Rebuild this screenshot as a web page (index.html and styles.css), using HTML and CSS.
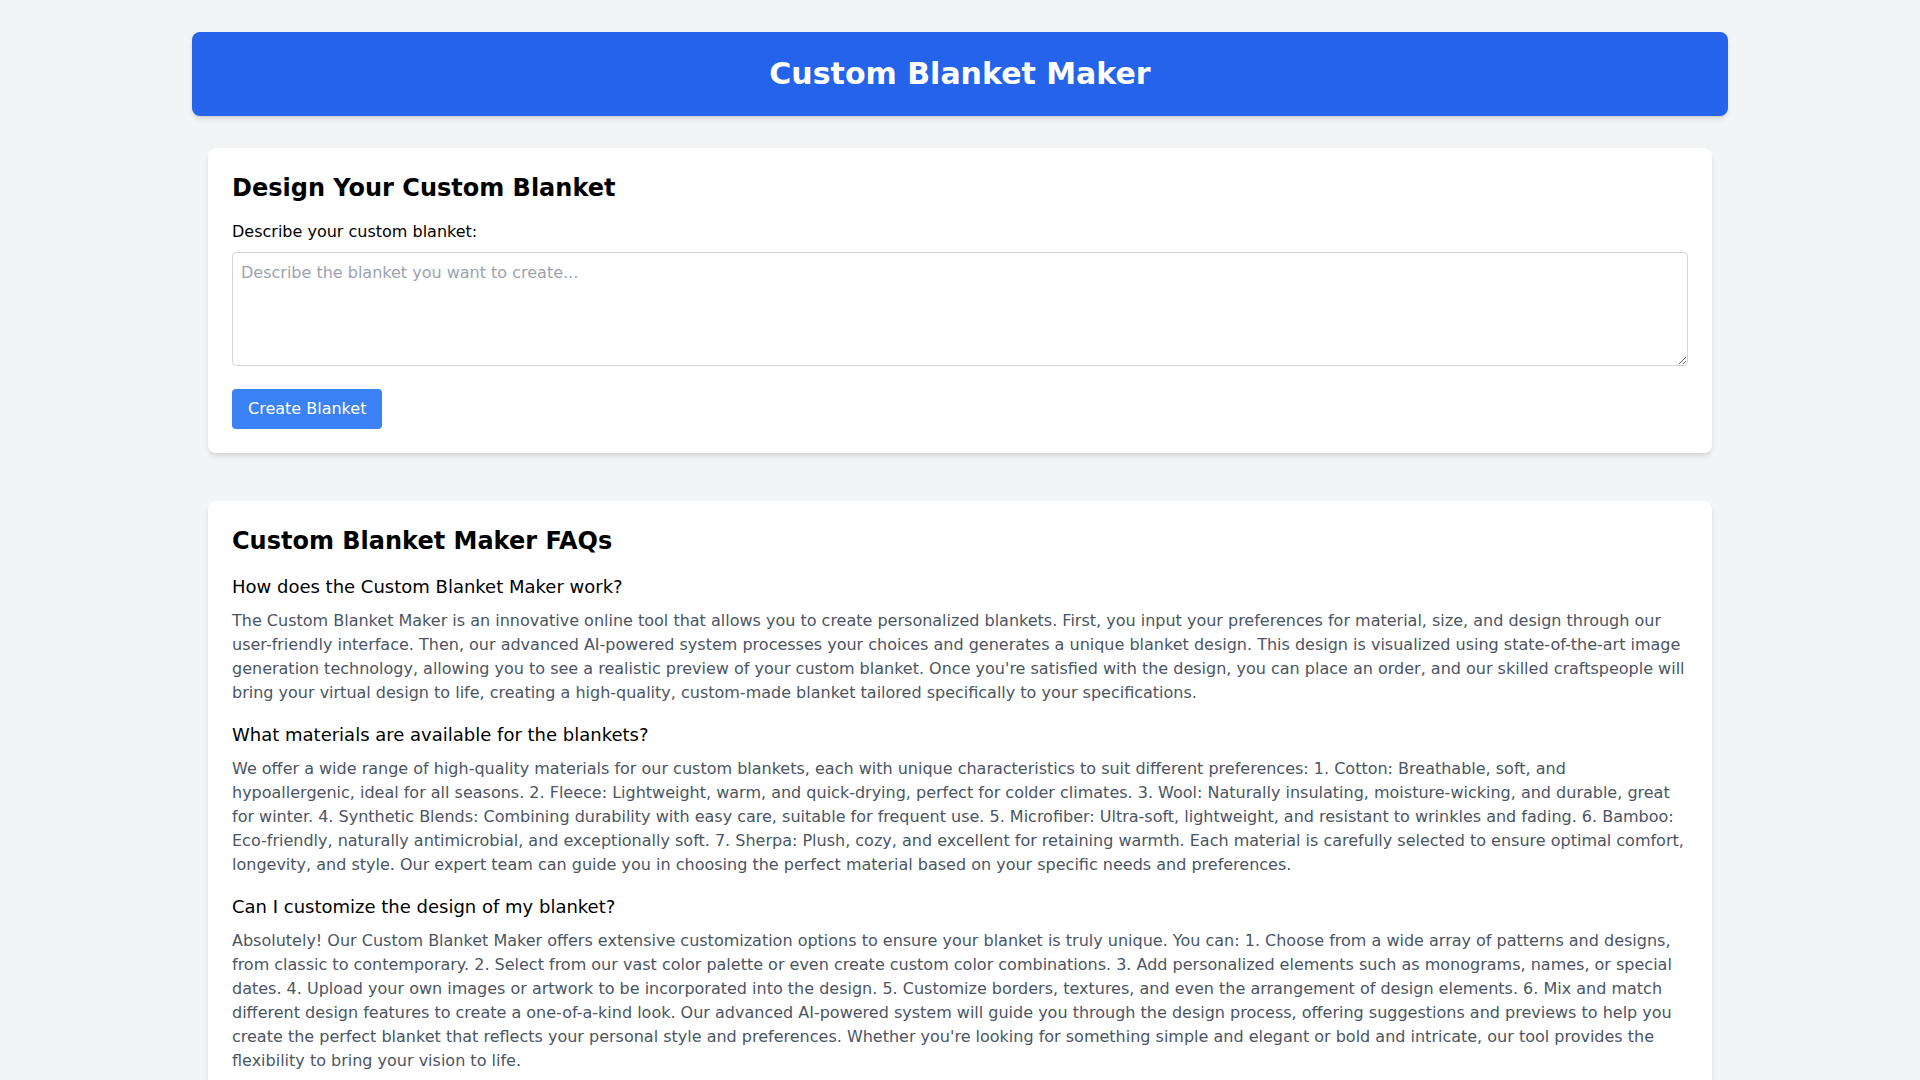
FILE: index.html
```html
<!DOCTYPE html>
<html lang="en">
<head>
<meta charset="utf-8">
<title>Custom Blanket Maker</title>
<link rel="stylesheet" href="styles.css">
</head>
<body>
<div class="container">
  <header class="site-header">
    <h1 class="site-title">Custom Blanket Maker</h1>
  </header>
  <main class="main">
    <section class="card design-card">
      <h2 class="card-title">Design Your Custom Blanket</h2>
      <label class="field-label" for="desc">Describe your custom blanket:</label>
      <textarea id="desc" class="field-textarea" rows="4" placeholder="Describe the blanket you want to create..."></textarea>
      <button class="btn-primary" type="button">Create Blanket</button>
    </section>
    <section class="card faq-card">
      <h2 class="card-title">Custom Blanket Maker FAQs</h2>
      <div class="faq-item">
        <h3 class="faq-question">How does the Custom Blanket Maker work?</h3>
        <p class="faq-answer">The Custom Blanket Maker is an innovative online tool that allows you to create personalized blankets. First, you input your preferences for material, size, and design through our user-friendly interface. Then, our advanced AI-powered system processes your choices and generates a unique blanket design. This design is visualized using state-of-the-art image generation technology, allowing you to see a realistic preview of your custom blanket. Once you're satisfied with the design, you can place an order, and our skilled craftspeople will bring your virtual design to life, creating a high-quality, custom-made blanket tailored specifically to your specifications.</p>
      </div>
      <div class="faq-item">
        <h3 class="faq-question">What materials are available for the blankets?</h3>
        <p class="faq-answer">We offer a wide range of high-quality materials for our custom blankets, each with unique characteristics to suit different preferences: 1. Cotton: Breathable, soft, and hypoallergenic, ideal for all seasons. 2. Fleece: Lightweight, warm, and quick-drying, perfect for colder climates. 3. Wool: Naturally insulating, moisture-wicking, and durable, great for winter. 4. Synthetic Blends: Combining durability with easy care, suitable for frequent use. 5. Microfiber: Ultra-soft, lightweight, and resistant to wrinkles and fading. 6. Bamboo: Eco-friendly, naturally antimicrobial, and exceptionally soft. 7. Sherpa: Plush, cozy, and excellent for retaining warmth. Each material is carefully selected to ensure optimal comfort, longevity, and style. Our expert team can guide you in choosing the perfect material based on your specific needs and preferences.</p>
      </div>
      <div class="faq-item">
        <h3 class="faq-question">Can I customize the design of my blanket?</h3>
        <p class="faq-answer">Absolutely! Our Custom Blanket Maker offers extensive customization options to ensure your blanket is truly unique. You can: 1. Choose from a wide array of patterns and designs, from classic to contemporary. 2. Select from our vast color palette or even create custom color combinations. 3. Add personalized elements such as monograms, names, or special dates. 4. Upload your own images or artwork to be incorporated into the design. 5. Customize borders, textures, and even the arrangement of design elements. 6. Mix and match different design features to create a one-of-a-kind look. Our advanced AI-powered system will guide you through the design process, offering suggestions and previews to help you create the perfect blanket that reflects your personal style and preferences. Whether you're looking for something simple and elegant or bold and intricate, our tool provides the flexibility to bring your vision to life.</p>
      </div>
    </section>
  </main>
</div>
</body>
</html>
```

FILE: styles.css
```css
* {
  box-sizing: border-box;
}

html, body {
  margin: 0;
  padding: 0;
}

body {
  background: #f3f4f6;
  font-family: "DejaVu Sans", Verdana, sans-serif;
  font-size: 16px;
  line-height: 24px;
  color: #000;
}

.container {
  max-width: 1536px;
  margin: 0 auto;
  padding: 32px 0;
}

.site-header {
  background: #2563eb;
  border-radius: 8px;
  padding: 24px;
  box-shadow: 0 4px 6px -1px rgba(0, 0, 0, 0.1), 0 2px 4px -2px rgba(0, 0, 0, 0.1);
  margin-bottom: 32px;
}

.site-title {
  margin: 0;
  color: #fff;
  font-size: 30px;
  line-height: 36px;
  font-weight: 700;
  text-align: center;
}

.main {
  padding: 0 16px;
}

.card {
  background: #fff;
  border-radius: 8px;
  padding: 24px;
  box-shadow: 0 4px 6px -1px rgba(0, 0, 0, 0.1), 0 2px 4px -2px rgba(0, 0, 0, 0.1);
}

.design-card {
  margin-bottom: 48px;
}

.card-title {
  margin: 0 0 16px;
  font-size: 24px;
  line-height: 32px;
  font-weight: 700;
}

.field-label {
  display: block;
  margin-bottom: 8px;
  font-size: 16px;
  line-height: 24px;
}

.field-textarea {
  display: block;
  width: 100%;
  height: 114px;
  padding: 8px;
  border: 1px solid #d1d5db;
  border-radius: 4px;
  font-family: inherit;
  font-size: 16px;
  line-height: 24px;
  color: #000;
  margin-bottom: 23px;
  resize: vertical;
}

.field-textarea::placeholder {
  color: #9ca3af;
}

.btn-primary {
  display: inline-block;
  background: #3b82f6;
  color: #fff;
  border: none;
  border-radius: 4px;
  padding: 8px 16px;
  font-family: inherit;
  font-size: 16px;
  line-height: 24px;
  cursor: pointer;
}

.faq-item {
  margin-bottom: 16px;
}

.faq-item:last-child {
  margin-bottom: 0;
}

.faq-question {
  margin: 0 0 8px;
  font-size: 18px;
  line-height: 28px;
  font-weight: 400;
  color: #000;
}

.faq-answer {
  margin: 0;
  color: #4b5563;
  font-size: 16px;
  line-height: 24px;
}
```
